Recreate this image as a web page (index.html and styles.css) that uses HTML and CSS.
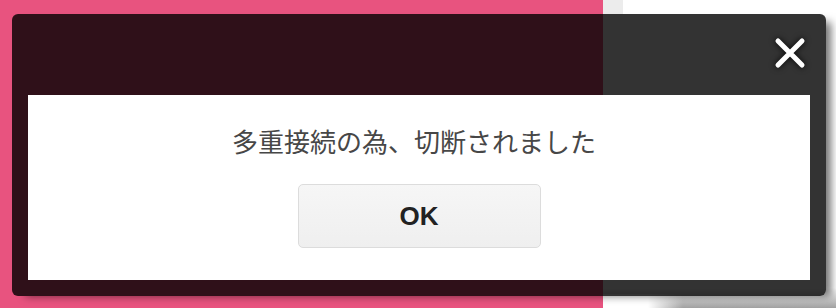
FILE: index.html
```html
<!DOCTYPE html>
<html lang="ja">
<head>
<meta charset="utf-8">
<title>切断</title>
<link rel="stylesheet" href="styles.css">
</head>
<body>
<div class="page">
  <div class="bg-left"></div>
  <div class="bg-right"></div>
  <div class="dialog">
    <div class="dialog-head">
      <button class="close" aria-label="閉じる">
        <svg width="34" height="34" viewBox="0 0 34 34"><path d="M5 5 L29 29 M29 5 L5 29" stroke="#fff" stroke-width="5" stroke-linecap="round"/></svg>
      </button>
    </div>
    <div class="dialog-body">
      <p class="message">多重接続の為、切断されました</p>
      <button class="ok">OK</button>
    </div>
  </div>
</div>
</body>
</html>
```

FILE: styles.css
```css
html, body {
  margin: 0;
  padding: 0;
}
body {
  width: 836px;
  height: 308px;
  overflow: hidden;
  font-family: "Noto Sans CJK JP", "Liberation Sans", sans-serif;
}
.page {
  position: relative;
  display: flex;
  width: 836px;
  height: 308px;
}
.bg-left {
  width: 603px;
  background: #e8537f;
}
.bg-right {
  flex: 1;
  background:
    linear-gradient(to right, #ececec 0, #ececec 20px, transparent 20px) top / 100% 14px no-repeat,
    linear-gradient(to right, #ffffff 0, #ffffff 45px, rgba(255,255,255,0) 80px) bottom / 100% 14px no-repeat,
    linear-gradient(to bottom, #ffffff 0, #ffffff 288px, #a0a0a0 308px);
}
.dialog {
  position: absolute;
  left: 12px;
  top: 14px;
  width: 814px;
  height: 282px;
  box-sizing: border-box;
  padding: 0 16px 16px;
  background: rgba(0, 0, 0, 0.8);
  border-radius: 6px;
  box-shadow: 9px 4px 8px -4px rgba(0, 0, 0, 0.55);
  display: flex;
  flex-direction: column;
}
.dialog-head {
  height: 81px;
  display: flex;
  justify-content: flex-end;
  align-items: center;
}
.close {
  margin: 0 -16px 0 0;
  padding: 0;
  width: 44px;
  height: 44px;
  border: 0;
  background: transparent;
  display: flex;
  align-items: center;
  justify-content: center;
  filter: drop-shadow(0 0 3px rgba(0,0,0,0.9));
  position: relative;
  top: -2px;
  left: -14px;
}
.dialog-body {
  flex: 1;
  background: #fff;
  display: flex;
  flex-direction: column;
  align-items: center;
}
.message {
  margin: 31px 10px 0 0;
  font-size: 26px;
  line-height: 30px;
  color: #474747;
  letter-spacing: 0;
}
.ok {
  margin-top: 28px;
  width: 243px;
  height: 64px;
  border: 1px solid #dcdcdc;
  border-radius: 5px;
  background: linear-gradient(#f6f6f6, #efefef);
  font-family: "Liberation Sans", Arial, sans-serif;
  font-weight: bold;
  font-size: 26px;
  color: #222;
  padding: 0;
}
```
